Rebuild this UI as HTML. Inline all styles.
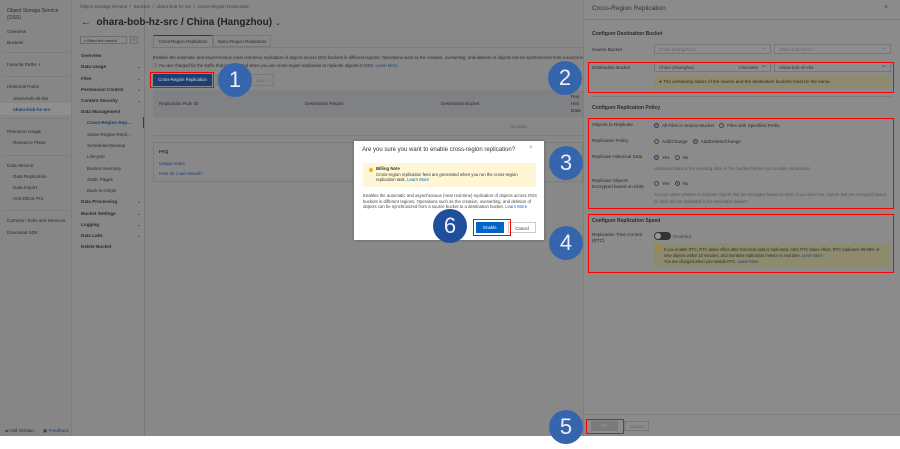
<!DOCTYPE html>
<html><head><meta charset="utf-8"><style>
*{margin:0;padding:0;box-sizing:border-box}
body{width:900px;height:449px;overflow:hidden;background:#fff;font-family:"Liberation Sans",sans-serif;color:#2b2b2b;position:relative}
.a{position:absolute;white-space:nowrap}
.s{font-size:4.6px}
.m{font-size:5px}
.b{font-weight:bold}
.ln{position:absolute;height:1px;background:#7c7c7c}
.red{position:absolute;border:1px solid #ff0000}
.c{position:absolute;border-radius:50%;background:#3565ad;color:#eef;font-size:22px;text-align:center;font-family:"Liberation Sans",sans-serif}
.rd{display:inline-block;width:5px;height:5px;border:1px solid #444;border-radius:50%;vertical-align:-1px;margin-right:3px;position:relative}
.rd.on{border-color:#1d3e70}
.rd.on:after{content:"";position:absolute;left:1px;top:1px;width:1px;height:1px;background:#1d3e70;border-radius:50%}
.sel{position:absolute;height:10px;border:1px solid #777;background:#8d8d8d;font-size:4.5px;padding:2px 4px;color:#333}
.sel:after{content:"⌄";position:absolute;right:4px;top:-1px;font-size:6px}
.lk{color:#1d3e70}
</style></head><body>
<div class="a" style="left:0;top:0;width:900px;height:436px;background:#888"></div>
<div class="a" style="left:0;top:0;width:72px;height:436px;background:#868686;border-right:1px solid #7d7d7d"></div>
<div class="a m" style="left:7px;top:8px;line-height:7px">Object Storage Service<br>(OSS)</div>
<div class="a s" style="left:7px;top:29px">Overview</div>
<div class="a s" style="left:7px;top:40px">Buckets</div>
<div class="ln" style="left:3px;top:52px;width:66px"></div>
<div class="a s" style="left:7px;top:62px">Favorite Paths +</div>
<div class="ln" style="left:3px;top:76px;width:66px"></div>
<div class="a s" style="left:7px;top:84px">Historical Paths</div>
<div class="a s" style="left:13px;top:96px">ohara-bob-sh-dst</div>
<div class="a" style="left:0;top:103px;width:71px;height:12px;background:#8f8f8f"></div>
<div class="a s b" style="left:13px;top:107px;color:#1d3e70">ohara-bob-hz-src</div>
<div class="ln" style="left:3px;top:118px;width:66px"></div>
<div class="a s" style="left:7px;top:129px">Resource Usage</div>
<div class="a s" style="left:13px;top:140px">Resource Plans</div>
<div class="ln" style="left:3px;top:155px;width:66px"></div>
<div class="a s" style="left:7px;top:163px">Data Service</div>
<div class="a s" style="left:13px;top:174px">Data Replication</div>
<div class="a s" style="left:13px;top:185px">Data Import</div>
<div class="a s" style="left:13px;top:196px">Anti-DDoS Pro</div>
<div class="ln" style="left:3px;top:210px;width:66px"></div>
<div class="a s" style="left:7px;top:218px">Common Tools and Services</div>
<div class="a s" style="left:7px;top:230px">Download SDK</div>
<div class="a s" style="left:5px;top:428px">⇄ Old Version</div>
<div class="a s" style="left:43px;top:428px;color:#1d3e70">▣ Feedback</div>
<div class="a" style="left:73px;top:0;width:72px;height:436px;border-right:1px solid #7a7a7a"></div>
<div class="a s" style="left:80px;top:36px;width:47px;height:8px;border:1px solid #6e6e6e;padding:1px 3px;font-size:4px">⌕ Enter the condor</div>
<div class="a s" style="left:130px;top:36px;width:8px;height:8px;border:1px solid #6e6e6e;text-align:center;font-size:5px">☆</div>
<div class="a s b" style="left:81px;top:53px">Overview</div>
<div class="a s b" style="left:81px;top:64px">Data Usage</div>
<div class="a s b" style="left:81px;top:76px">Files</div>
<div class="a s b" style="left:81px;top:87px">Permission Control</div>
<div class="a s b" style="left:81px;top:98px">Content Security</div>
<div class="a s b" style="left:81px;top:109px">Data Management</div>
<div class="a s b" style="left:87px;top:120px;color:#1d3e70">Cross-Region Rep...</div>
<div class="a" style="left:143px;top:117px;width:1px;height:11px;background:#1d3e70"></div>
<div class="a s" style="left:87px;top:132px">Same-Region Repli...</div>
<div class="a s" style="left:87px;top:143px">Scheduled Backup</div>
<div class="a s" style="left:87px;top:154px">Lifecycle</div>
<div class="a s" style="left:87px;top:166px">Bucket Inventory</div>
<div class="a s" style="left:87px;top:177px">Static Pages</div>
<div class="a s" style="left:87px;top:188px">Back-to-Origin</div>
<div class="a s b" style="left:81px;top:199px">Data Processing</div>
<div class="a s b" style="left:81px;top:211px">Bucket Settings</div>
<div class="a s b" style="left:81px;top:222px">Logging</div>
<div class="a s b" style="left:81px;top:233px">Data Lake</div>
<div class="a s b" style="left:81px;top:244px">Delete Bucket</div>
<div class="a s" style="left:137px;top:64px">⌄</div><div class="a s" style="left:137px;top:76px">⌄</div><div class="a s" style="left:137px;top:87px">⌄</div><div class="a s" style="left:137px;top:98px">⌄</div><div class="a s" style="left:137px;top:199px">⌄</div><div class="a s" style="left:137px;top:211px">⌄</div><div class="a s" style="left:137px;top:222px">⌄</div><div class="a s" style="left:137px;top:233px">⌄</div>
<div class="a s" style="left:80px;top:4px;color:#444">Object Storage Service &nbsp;/&nbsp; Buckets &nbsp;/&nbsp; ohara-bob-hz-src &nbsp;/&nbsp; Cross-Region Replication</div>
<div class="a b" style="left:81px;top:17px;font-size:10px;color:#222">←&nbsp; ohara-bob-hz-src / China (Hangzhou) <span style="font-weight:normal;font-size:7px">⌄</span></div>
<div class="ln" style="left:150px;top:47px;width:433px"></div>
<div class="a s" style="left:153px;top:35px;width:60px;height:13px;border:1px solid #777;border-top:1px solid #1d3e70;background:#888;padding-top:3px;text-align:center;font-size:4.3px">Cross-Region Replication</div>
<div class="a s" style="left:213px;top:35px;width:58px;height:12px;border:1px solid #777;padding-top:3px;text-align:center;font-size:4.3px">Same-Region Replication</div>
<div class="a s" style="left:153px;top:55px;font-size:4.3px">Enables the automatic and asynchronous (near real-time) replication of objects across OSS buckets in different regions. Operations such as the creation, overwriting, and deletion of objects can be synchronized from a source bucket</div>
<div class="a s" style="left:153px;top:63px;font-size:4.3px">ⓘ You are charged for the traffic that is generated when you use cross-region replication to replicate objects in OSS. <span class="lk">Learn More</span></div>
<div class="a s" style="left:153px;top:74px;width:59px;height:12px;background:#1d3e70;color:#ddd;text-align:center;padding-top:3px;font-size:4.3px">Cross-Region Replication</div>
<div class="red" style="left:150px;top:72px;width:64px;height:16px"></div>
<div class="a s" style="left:217px;top:74px;width:57px;height:12px;border:1px solid #777;text-align:right;padding:3px 4px 0 0;color:#666;font-size:4.3px">ring ⓘ</div>
<div class="a" style="left:153px;top:90px;width:430px;height:27px;background:#808184"></div>
<div class="a s" style="left:159px;top:101px">Replication Rule ID</div>
<div class="a s" style="left:305px;top:101px">Destination Region</div>
<div class="a s" style="left:441px;top:101px">Destination Bucket</div>
<div class="a s" style="left:571px;top:93px;line-height:7px">Rep<br>Hist<br>Data</div>
<div class="a s" style="left:510px;top:124px;color:#555">No Data</div>
<div class="ln" style="left:153px;top:135px;width:430px"></div>
<div class="a" style="left:153px;top:142px;width:430px;height:40px;border:1px solid #7c7c7c"></div>
<div class="a s b" style="left:159px;top:149px">FAQ</div>
<div class="a s lk" style="left:159px;top:161px">Usage notes</div>
<div class="a s lk" style="left:159px;top:171px">How do I use ossutil?</div>
<div class="a" style="left:583px;top:0;width:317px;height:436px;background:#8b8b8b;border-left:1px solid #7e7e7e"></div>
<div class="a" style="left:592px;top:5px;font-size:6.5px;color:#333">Cross-Region Replication</div>
<div class="a" style="left:884px;top:4px;font-size:7px;color:#444">×</div>
<div class="ln" style="left:584px;top:19px;width:316px"></div>
<div class="a m b" style="left:592px;top:31px">Configure Destination Bucket</div>
<div class="a s" style="left:592px;top:47px">Source Bucket</div>
<div class="sel" style="left:654px;top:44px;width:117px;color:#666">China (Hangzhou)</div>
<div class="sel" style="left:774px;top:44px;width:117px;color:#666">ohara-bob-hz-src</div>
<div class="a s" style="left:592px;top:65px">Destination Bucket</div>
<div class="sel" style="left:654px;top:62px;width:117px">China (Shanghai)<span style="position:absolute;right:12px">3 Buckets</span></div>
<div class="sel" style="left:774px;top:62px;width:117px">ohara-bob-sh-dst</div>
<div class="a s" style="left:654px;top:75px;width:237px;height:13px;background:#8e8a6e;padding:4px 5px">● The versioning status of the source and the destination buckets must be the same.</div>
<div class="red" style="left:588px;top:62px;width:306px;height:31px"></div>
<div class="ln" style="left:592px;top:96px;width:299px"></div>
<div class="a m b" style="left:592px;top:105px">Configure Replication Policy</div>
<div class="red" style="left:588px;top:118px;width:306px;height:91px"></div>
<div class="a s" style="left:592px;top:122px">Objects to Replicate</div>
<div class="a s" style="left:654px;top:123px"><span class="rd on"></span>All Files in Source Bucket &nbsp;&nbsp; <span class="rd"></span>Files with Specified Prefix</div>
<div class="a s" style="left:592px;top:138px">Replication Policy</div>
<div class="a s" style="left:654px;top:139px"><span class="rd"></span>Add/Change &nbsp;&nbsp; <span class="rd on"></span>Add/Delete/Change</div>
<div class="a s" style="left:592px;top:154px">Replicate Historical Data</div>
<div class="a s" style="left:654px;top:155px"><span class="rd on"></span>Yes &nbsp;&nbsp; <span class="rd"></span>No</div>
<div class="a s" style="left:654px;top:166px;color:#555">Historical data is the existing data in the bucket before you enable replication.</div>
<div class="a s" style="left:592px;top:178px;line-height:6px">Replicate Objects<br>Encrypted based on KMS</div>
<div class="a s" style="left:654px;top:181px"><span class="rd"></span>Yes &nbsp;&nbsp; <span class="rd on"></span>No</div>
<div class="a s" style="left:654px;top:191px;color:#555;line-height:7px;font-size:4.1px">You can select whether to replicate objects that are encrypted based on KMS. If you select No, objects that are encrypted based<br>on KMS are not replicated to the destination bucket.</div>
<div class="red" style="left:588px;top:214px;width:306px;height:59px"></div>
<div class="a m b" style="left:592px;top:218px">Configure Replication Speed</div>
<div class="a s" style="left:592px;top:232px;line-height:6px">Replication Time Control<br>(RTC)</div>
<div class="a" style="left:654px;top:232px;width:17px;height:8px;border-radius:4px;background:#333"></div>
<div class="a" style="left:655px;top:233px;width:6px;height:6px;border-radius:50%;background:#999"></div>
<div class="a s" style="left:673px;top:234px;color:#444">Disabled</div>
<div class="a s" style="left:654px;top:243px;width:237px;height:25px;background:#8e8a6e;padding:4px 10px;line-height:6px;font-size:4.1px;overflow:hidden">If you enable RTC, RTC takes effect after historical data is replicated. After RTC takes effect, RTC replicates 99.99% of<br>new objects within 10 minutes, and monitors replication metrics in real time. <span class="lk">Learn More</span><br>You are charged when you enable RTC. <span class="lk">Learn More</span></div>
<div class="a" style="left:655px;top:245px;width:5px;height:5px;border-radius:50%;background:#a08a20"></div>
<div class="ln" style="left:584px;top:414px;width:316px"></div>
<div class="a s" style="left:591px;top:421px;width:27px;height:10px;background:#7a7a7a;color:#999;text-align:center;padding-top:2px">OK</div>
<div class="a s" style="left:624px;top:421px;width:25px;height:10px;border:1px solid #777;color:#666;text-align:center;padding-top:2px">Cancel</div>
<div class="red" style="left:586px;top:419px;width:38px;height:15px"></div>
<div class="a" style="left:354px;top:141px;width:190px;height:99px;background:#fff;box-shadow:0 0 3px rgba(0,0,0,.3)"></div>
<div class="a" style="left:362px;top:147px;font-size:6px;color:#333">Are you sure you want to enable cross-region replication?</div>
<div class="a" style="left:529px;top:145px;font-size:6px;color:#888">×</div>
<div class="a" style="left:363px;top:163px;width:173px;height:24px;background:#fff6d6"></div>
<div class="a" style="left:369px;top:168px;width:4px;height:4px;border-radius:50%;background:#f0b400"></div>
<div class="a s" style="left:376px;top:166px;line-height:5.5px;color:#333;font-size:4.3px"><b>Billing Note</b><br>Cross-region replication fees are generated when you run the cross-region<br>replication task. <span style="color:#0064c8">Learn More</span></div>
<div class="a s" style="left:363px;top:193px;line-height:5.7px;color:#444;font-size:4.3px">Enables the automatic and asynchronous (near real-time) replication of objects across OSS<br>buckets in different regions. Operations such as the creation, overwriting, and deletion of<br>objects can be synchronized from a source bucket to a destination bucket. <span style="color:#0064c8">Learn More</span></div>
<div class="a s" style="left:476px;top:222px;width:28px;height:11px;background:#0064c8;color:#fff;text-align:center;padding-top:3px;font-size:4.3px">Enable</div>
<div class="a s" style="left:508px;top:222px;width:28px;height:11px;border:1px solid #ccc;color:#333;text-align:center;padding-top:3px;font-size:4.3px">Cancel</div>
<div class="red" style="left:473px;top:219px;width:38px;height:17px"></div>
<div class="c" style="left:218px;top:63px;width:34px;height:34px;line-height:34px">1</div>
<div class="c" style="left:548px;top:61px;width:34px;height:34px;line-height:34px">2</div>
<div class="c" style="left:549px;top:146px;width:34px;height:34px;line-height:34px">3</div>
<div class="c" style="left:549px;top:226px;width:34px;height:34px;line-height:34px">4</div>
<div class="c" style="left:549px;top:410px;width:34px;height:34px;line-height:34px">5</div>
<div class="c" style="left:433px;top:209px;width:34px;height:34px;line-height:34px;background:#1f4f9a">6</div>
</body></html>
